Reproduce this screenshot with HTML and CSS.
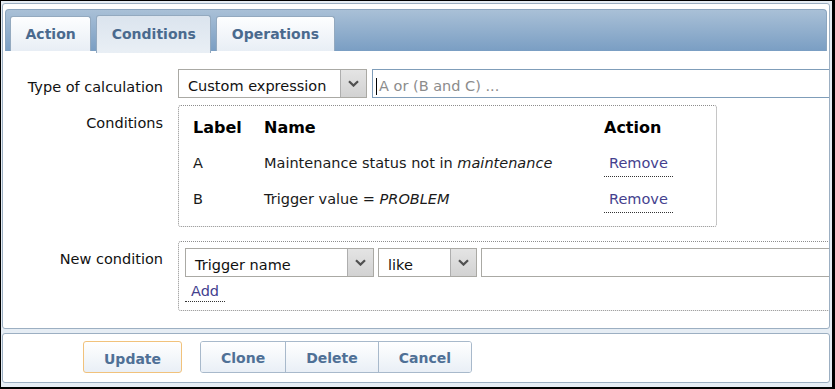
FILE: index.html
```html
<!DOCTYPE html>
<html lang="en">
<head>
  <meta charset="UTF-8">
  <title>Action conditions</title>
  <link rel="stylesheet" href="styles.css">
</head>
<body>
  <div class="frame">
    <div class="panel">
      <div class="tabs">
        <div class="tab">Action</div>
        <div class="tab tab-active">Conditions</div>
        <div class="tab">Operations</div>
      </div>

      <div class="form">
        <div class="row">
          <div class="label">Type of calculation</div>
          <div class="select">
            <span class="select-text">Custom expression</span>
            <span class="select-arrow">
              <svg width="11" height="7" viewBox="0 0 11 7"><path d="M1 1.2 L5.5 5.6 L10 1.2" fill="none" stroke="#505050" stroke-width="2.2"/></svg>
            </span>
          </div>
          <div class="textbox textbox-focus"><span class="caret"></span>A or (B and C) ...</div>
        </div>

        <div class="row row-conditions">
          <div class="label">Conditions</div>
          <div class="cond-box">
            <table class="cond-table">
              <thead>
                <tr>
                  <th class="col-label">Label</th>
                  <th class="col-name">Name</th>
                  <th>Action</th>
                </tr>
              </thead>
              <tbody>
                <tr>
                  <td>A</td>
                  <td>Maintenance status not in <em>maintenance</em></td>
                  <td><a href="#" class="link-btn">Remove</a></td>
                </tr>
                <tr>
                  <td>B</td>
                  <td>Trigger value = <em>PROBLEM</em></td>
                  <td><a href="#" class="link-btn">Remove</a></td>
                </tr>
              </tbody>
            </table>
          </div>
        </div>

        <div class="row row-new">
          <div class="label">New condition</div>
          <div class="new-box">
            <div class="new-fields">
              <div class="select">
                <span class="select-text">Trigger name</span>
                <span class="select-arrow">
                  <svg width="11" height="7" viewBox="0 0 11 7"><path d="M1 1.2 L5.5 5.6 L10 1.2" fill="none" stroke="#505050" stroke-width="2.2"/></svg>
                </span>
              </div>
              <div class="select select-small">
                <span class="select-text">like</span>
                <span class="select-arrow">
                  <svg width="11" height="7" viewBox="0 0 11 7"><path d="M1 1.2 L5.5 5.6 L10 1.2" fill="none" stroke="#505050" stroke-width="2.2"/></svg>
                </span>
              </div>
              <div class="textbox"></div>
            </div>
            <a href="#" class="link-btn add-link">Add</a>
          </div>
        </div>
      </div>
    </div>

    <div class="footer">
      <button class="btn btn-main">Update</button>
      <div class="btn-group">
        <button class="btn">Clone</button>
        <button class="btn">Delete</button>
        <button class="btn">Cancel</button>
      </div>
    </div>
  </div>
</body>
</html>
```

FILE: styles.css
```css
body {
  margin: 0;
  font-family: "DejaVu Sans", Verdana, sans-serif;
  font-size: 14.5px;
  color: #1a1a1a;
}
.frame {
  height: 389px;
  box-sizing: border-box;
  border: solid #000;
  border-width: 1px 3px 2px 1px;
  padding: 2px 2px 4px 1px;
  background: #e6edf4;
}
.panel {
  background: #fff;
  border: 1px solid #9cafc2;
  border-radius: 3px;
  overflow: hidden;
  padding-bottom: 17px;
}

/* tabs */
.tabs {
  display: flex;
  align-items: flex-end;
  gap: 5px;
  height: 41px;
  margin: 5px 2px 0;
  padding-left: 4px;
  border: 1px solid #8ba5bf;
  border-bottom: none;
  border-radius: 4px 4px 0 0;
  background: linear-gradient(#a9c0d7, #7a9ec3);
}
.tab {
  padding: 1px 14.5px 1px;
  line-height: 32px;
  font-size: 14px;
  font-weight: bold;
  color: #4a6a8e;
  border: 1px solid #93a9bf;
  border-bottom: none;
  border-radius: 3px 3px 0 0;
  background: linear-gradient(#fdfeff, #e8eef5);
}
.tab-active {
  padding: 2px 14.5px 3px;
  margin-bottom: -2px;
  background: linear-gradient(#dbe4ee, #e9eff5);
}

/* form rows */
.form {
  padding-top: 18px;
}
.row {
  display: flex;
}
.row-conditions {
  margin-top: 7px;
}
.row-new {
  margin-top: 14px;
}
.label {
  width: 175px;
  flex-shrink: 0;
  box-sizing: border-box;
  padding: 9px 15px 0 0;
  line-height: 18px;
  text-align: right;
  color: #111;
}

.select {
  display: flex;
  flex-shrink: 0;
  width: 189px;
  height: 29px;
  box-sizing: border-box;
  border: 1px solid #aaa9a4;
  background: #fff;
}
.select-small {
  width: 99px;
}
.select-text {
  flex: 1;
  padding: 7px 0 0 9px;
  line-height: 18px;
  white-space: nowrap;
  overflow: hidden;
  color: #111;
}
.select-arrow {
  width: 25px;
  display: flex;
  align-items: center;
  justify-content: center;
  border-left: 1px solid #aeaeae;
  background: linear-gradient(#e4e4e4, #d2d2d2);
}

.textbox {
  flex-shrink: 0;
  width: 420px;
  height: 29px;
  box-sizing: border-box;
  border: 1px solid #aaa9a4;
  padding: 7px 0 0 3px;
  line-height: 18px;
  white-space: nowrap;
  color: #8c8c8c;
}
.textbox-focus {
  width: 600px;
  margin-left: 5px;
  border-color: #7f9db9;
}
.caret {
  display: inline-block;
  width: 1px;
  height: 17px;
  margin-right: 2px;
  vertical-align: -4px;
  background: #000;
}

/* conditions list */
.cond-box {
  width: 539px;
  flex-shrink: 0;
  box-sizing: border-box;
  padding: 4px 0 9px 14px;
  border: 1px dotted #8d8d8d;
  border-radius: 3px;
}
.cond-table {
  border-collapse: collapse;
}
.cond-table th,
.cond-table td {
  padding: 0;
  text-align: left;
  white-space: nowrap;
}
.cond-table th {
  font-size: 16px;
  line-height: 35px;
  color: #000;
}
.cond-table td {
  line-height: 36px;
}
.col-label {
  width: 71px;
}
.col-name {
  width: 340px;
}
.link-btn {
  display: inline-block;
  padding: 0 5px 4px;
  line-height: 17px;
  color: #443f8e;
  text-decoration: none;
  border-bottom: 1px dotted #333;
}

/* new condition */
.new-box {
  width: 700px;
  flex-shrink: 0;
  box-sizing: border-box;
  padding: 6px 0 8px 6px;
  border: 1px dotted #8d8d8d;
  border-radius: 3px;
}
.new-fields {
  display: flex;
  gap: 4px;
}
.add-link {
  display: block;
  width: fit-content;
  margin-top: 5px;
  padding: 0 6px 1px;
  line-height: 18px;
}

/* footer buttons */
.footer {
  display: flex;
  gap: 18px;
  margin-top: 4px;
  padding: 7px 0 9px 80px;
  background: #fff;
  border: 1px solid #9cafc2;
  border-radius: 3px;
}
.btn {
  margin: 0;
  padding: 4px 20px 0;
  line-height: 26px;
  font-family: "DejaVu Sans", Verdana, sans-serif;
  font-size: 14px;
  font-weight: bold;
  color: #4f7096;
  background: linear-gradient(#ffffff, #e9eff6);
  border: 1px solid #f1c27c;
  border-radius: 3px;
  cursor: pointer;
}
.btn-group {
  display: flex;
  border: 1px solid #a8b9cb;
  border-radius: 3px;
  overflow: hidden;
}
.btn-group .btn {
  padding: 3px 20px 0;
  line-height: 27px;
  border: none;
  border-left: 1px solid #a8b9cb;
  border-radius: 0;
}
.btn-group .btn:first-child {
  border-left: none;
}
```
